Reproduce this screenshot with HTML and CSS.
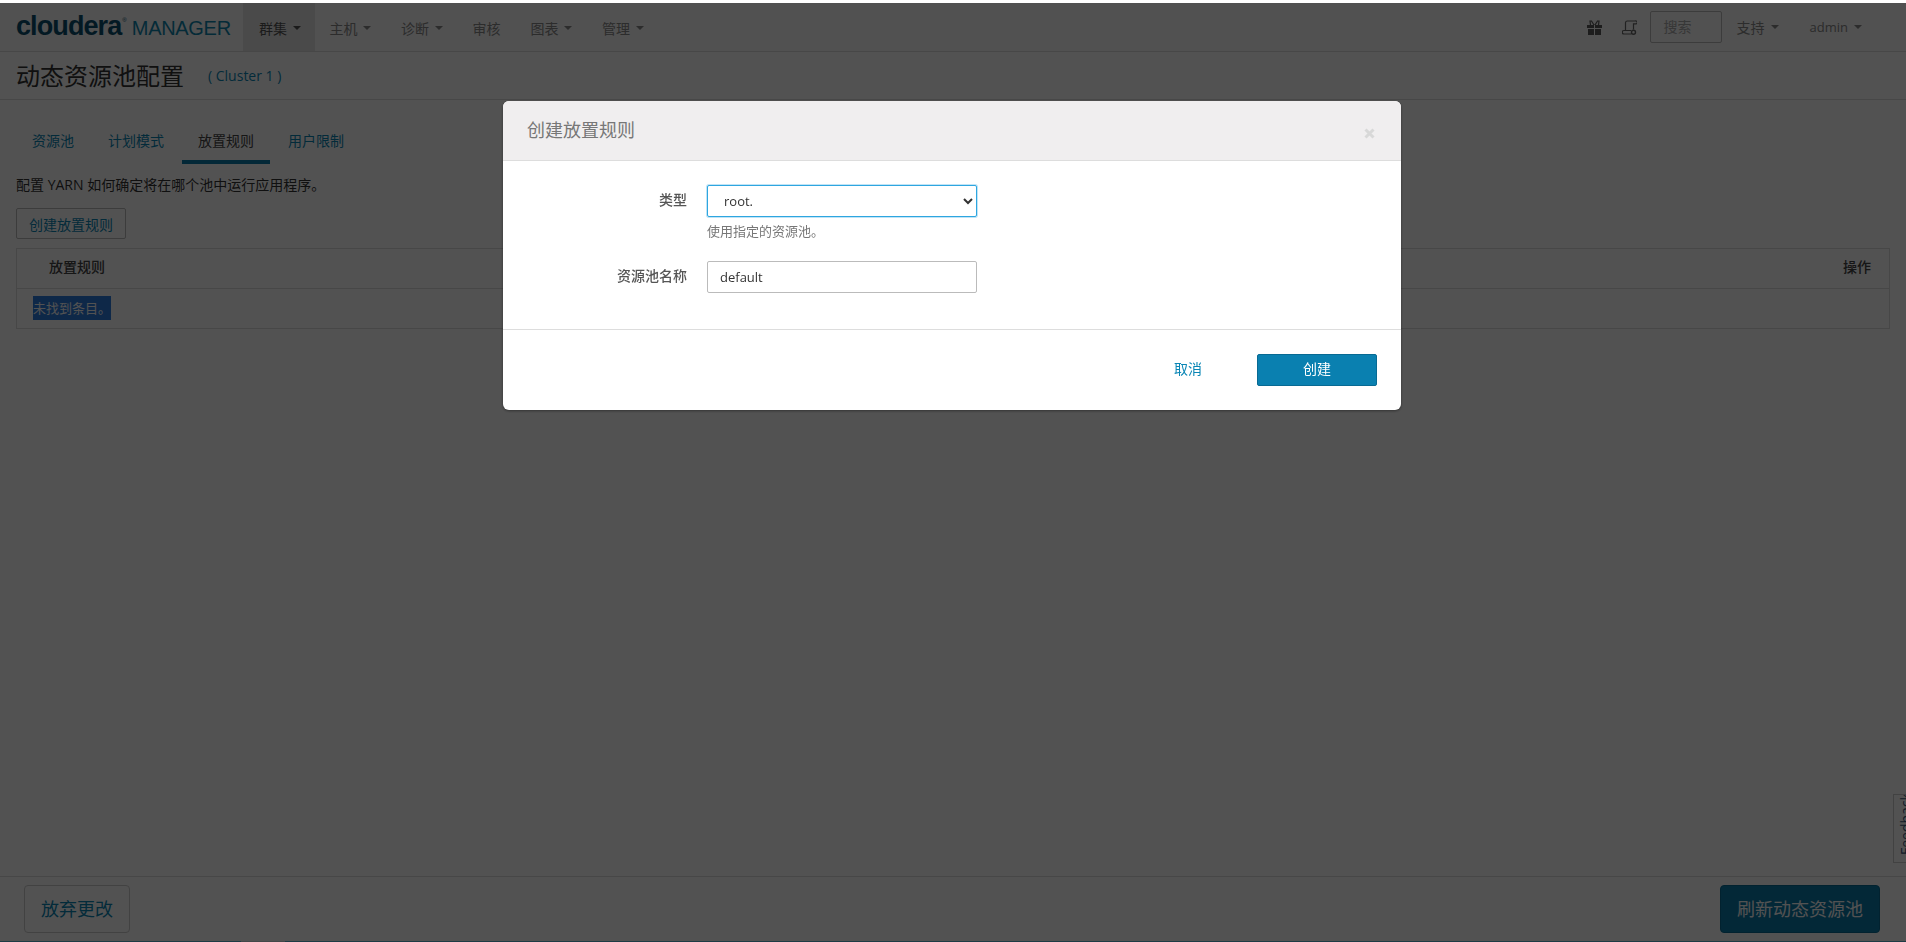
FILE: index.html
```html
<!DOCTYPE html>
<html lang="zh-CN">
<head>
<meta charset="utf-8">
<title>动态资源池配置</title>
<link rel="stylesheet" href="styles.css">
</head>
<body>
<div class="page">
  <header class="topbar">
    <div class="logo"><span class="logo-a">cloudera</span><span class="logo-r">®</span><span class="logo-b">MANAGER</span></div>
    <nav class="nav">
      <a class="nav-item active">群集<i class="caret"></i></a>
      <a class="nav-item">主机<i class="caret"></i></a>
      <a class="nav-item">诊断<i class="caret"></i></a>
      <a class="nav-item">审核</a>
      <a class="nav-item">图表<i class="caret"></i></a>
      <a class="nav-item">管理<i class="caret"></i></a>
    </nav>
    <div class="nav-right">
      <svg class="ico gift" viewBox="0 0 15 15"><path d="M0 5h7v3H0zM8 5h7v3H8zM1 9h6v6H1zM8 9h6v6H8z" fill="#5a5a5a"/><path d="M7 5L4.500 1H3L3.500 5M8 5l2.500-4H12l-.5 4" stroke="#5a5a5a" stroke-width="1.200" fill="none"/></svg>
      <svg class="ico scroll" viewBox="0 0 15 15"><path d="M3.500 10.500V2.500A1.800 1.800 0 0 1 5.300 1H13a1.500 1.500 0 0 1 1.300 2.800H11.500V9.500M2 14a1.700 1.700 0 0 1 0-3.500h7M2 14h7.500" fill="none" stroke="#666" stroke-width="1.200"/><circle cx="11.500" cy="12.200" r="2" fill="none" stroke="#666" stroke-width="1.400"/></svg>
      <div class="search">搜索</div>
      <a class="nav-item r1">支持<i class="caret"></i></a>
      <a class="nav-item r2">admin<i class="caret"></i></a>
    </div>
  </header>
  <div class="titlebar"><h1 class="title">动态资源池配置</h1><span class="cluster">( Cluster 1 )</span></div>
  <main class="content">
    <ul class="tabs">
      <li class="tab">资源池</li>
      <li class="tab">计划模式</li>
      <li class="tab active">放置规则</li>
      <li class="tab">用户限制</li>
    </ul>
    <p class="desc">配置 YARN 如何确定将在哪个池中运行应用程序。</p>
    <button class="btn-outline">创建放置规则</button>
    <div class="table">
      <div class="thead"><span class="th-name">放置规则</span><span class="th-op">操作</span></div>
      <div class="tbody"><span class="selected">未找到条目。</span></div>
    </div>
  </main>
  <footer class="footer">
    <button class="btn-large">放弃更改</button>
    <button class="btn-primary-large">刷新动态资源池</button>
  </footer>
  <div class="strip"><div class="strip-seg"></div></div>
  <div class="feedback"><span>Feedback</span></div>
</div>
<div class="overlay"></div>
<div class="modal">
  <div class="modal-head">
    <h3 class="modal-title">创建放置规则</h3>
    <svg class="close" viewBox="0 0 11 11"><path d="M1.500 1.500l8 8M9.500 1.500l-8 8" stroke="#d8d8d8" stroke-width="3" fill="none"/></svg>
  </div>
  <div class="modal-body">
    <div class="field">
      <label class="label">类型</label>
      <div class="control">
        <select class="input focus"><option>root.</option></select>
        <div class="help">使用指定的资源池。</div>
      </div>
    </div>
    <div class="field">
      <label class="label">资源池名称</label>
      <div class="control"><input class="input" value="default"></div>
    </div>
  </div>
  <div class="modal-foot">
    <a class="cancel">取消</a>
    <button class="create">创建</button>
  </div>
</div>
</body>
</html>
```
FILE: styles.css
```css
* { box-sizing: border-box; }
html, body { margin: 0; height: 100%; overflow: hidden; }
body {
  font-family: "Open Sans", "Liberation Sans", "Noto Sans CJK SC", sans-serif;
  font-size: 14px;
  color: #333;
  background: #fff;
}
button { font-family: inherit; }
.page { height: 942px; padding-top: 3px; display: flex; flex-direction: column; position: relative; }
.topbar { height: 49px; flex: none; display: flex; align-items: stretch; background: #fbfbfb; border-bottom: 1px solid #ddd; padding-left: 16px; }
.logo { width: 227px; flex: none; margin-top: 8px; white-space: nowrap; line-height: 30px; }
.logo-a { font: bold 27px/30px "Liberation Sans", sans-serif; color: #0a4f6e; letter-spacing: -0.9px; }
.logo-r { font: 6px/1 "Liberation Sans", sans-serif; color: #0a4f6e; vertical-align: 13px; margin-left: 1px; }
.logo-b { font: 20px/30px "Liberation Sans", sans-serif; color: #0f86ad; margin-left: 5px; letter-spacing: -0.3px; }
.nav { display: flex; }
.nav-item { display: flex; align-items: center; padding: 1px 15px 0; color: #888; white-space: nowrap; }
.nav-item.active { background: #e7e7e7; color: #555; padding: 1px 14px 0 16px; }
.caret { display: inline-block; margin-left: 5.500px; width: 0; height: 0; border-left: 4px solid transparent; border-right: 4px solid transparent; border-top: 4px solid currentColor; }
.nav-right { margin-left: auto; display: flex; align-items: center; padding-right: 44px; }
.nav-right .caret { margin-left: 6px; }
.ico { display: block; flex: none; }
.gift { width: 15px; height: 15px; margin-right: 20px; }
.scroll { width: 15px; height: 15px; margin-right: 13px; }
.search { width: 72px; height: 32px; border: 1px solid #bbb; border-radius: 2px; padding-left: 13px; line-height: 30px; color: #aaa; }
.nav-right .r1 { padding: 0 0 0 15px; }
.nav-right .r2 { padding: 0 0 0 31px; font-size: 13px; }
.titlebar { height: 48px; flex: none; display: flex; align-items: center; border-bottom: 1px solid #ddd; padding: 0 16px; }
.title { margin: 0; font-size: 24px; line-height: 34px; font-weight: 400; color: #333; }
.cluster { margin-left: 24px; color: #0a86b5; line-height: 20px; }
.content { flex: 1; min-height: 0; padding: 0 16px; }
.tabs { list-style: none; margin: 19px 0 0; padding: 0; display: flex; height: 45px; }
.tab { padding: 0 16px; margin-right: 2px; line-height: 44px; color: #0a86b5; }
.tab.active { color: #444; border-bottom: 4px solid #0a7cab; }
.desc { margin: 11px 0 0; line-height: 20px; color: #333; }
.btn-outline { display: block; margin-top: 13px; height: 31px; width: 110px; padding: 0; background: #fff; border: 1px solid #bbb; border-radius: 2px; color: #0a86b5; font-size: 14px; }
.table { margin-top: 9px; border: 1px solid #ddd; }
.thead { display: flex; justify-content: space-between; height: 40px; line-height: 36px; padding: 0 18px 0 32px; font-weight: 500; color: #444; border-bottom: 1px solid #ddd; }
.tbody { height: 39px; padding: 7px 16px 0; }
.selected { display: block; width: 78px; height: 24px; font-size: 13px; line-height: 24px; background: #2e7de0; color: #fff; }
.footer { height: 65px; flex: none; display: flex; justify-content: space-between; align-items: flex-start; padding: 8px 26px 0 24px; border-top: 1px solid #ddd; }
.btn-large { width: 106px; height: 48px; font-size: 18px; color: #0a86b5; background: #fff; border: 1px solid #ccc; border-radius: 4px; padding: 0 0 2px; }
.btn-primary-large { width: 160px; height: 48px; font-size: 18px; color: #fff; background: #0a7cab; border: 1px solid #086a93; border-radius: 4px; padding: 0 0 2px; }
.strip { height: 1px; flex: none; background: #5fb6d6; }
.strip-seg { width: 44px; height: 1px; margin-left: 241px; background: #d0e0e6; }
.feedback { position: absolute; right: 0; top: 794px; width: 13px; height: 69px; background: #fff; border: 1px solid #ccc; border-right: 0; overflow: hidden; }
.feedback span { position: absolute; left: 3px; top: 60px; transform-origin: 0 0; transform: rotate(-90deg); color: #3d5a80; font-size: 14px; line-height: 18px; white-space: nowrap; }
.overlay { position: fixed; left: 0; right: 0; top: 3px; bottom: 0; background: rgba(0,0,0,.68); }
.modal { position: fixed; left: 503px; top: 101px; width: 898px; height: 309px; background: #fff; border-radius: 6px; box-shadow: 0 1px 3px rgba(0,0,0,.4); display: flex; flex-direction: column; overflow: hidden; }
.modal-head { height: 60px; flex: none; background: #f0eeef; border-bottom: 1px solid #ddd; display: flex; justify-content: space-between; align-items: center; padding: 0 26px 0 24px; }
.modal-title { margin: -2px 0 0; font-size: 18px; font-weight: 400; line-height: 26px; color: #777; }
.close { width: 11px; height: 11px; margin-top: 6px; flex: none; }
.modal-body { height: 169px; flex: none; padding-top: 24px; border-bottom: 1px solid #ddd; }
.field { display: flex; margin-bottom: 21px; }
.label { width: 184px; flex: none; text-align: right; font-weight: 500; color: #555; line-height: 30px; }
.control { margin-left: 20px; width: 270px; }
.input { display: block; width: 270px; height: 32px; border: 1px solid #bbb; border-radius: 2px; padding: 0 12px; background: #fff; color: #333; font: 13px "Open Sans", sans-serif; }
.input.focus { border-color: #2ea6e0; box-shadow: 0 0 0 1px rgba(46,166,224,.3); outline: 0; }
.help { margin-top: 5px; color: #777; font-size: 13px; line-height: 18px; }
.modal-foot { flex: 1; display: flex; justify-content: flex-end; align-items: center; padding: 0 24px 0 0; }
.cancel { color: #0a86b5; margin: -5px 55px 0 0; }
.create { width: 120px; height: 32px; padding: 0 0 4px; background: #0a80b0; border: 1px solid #086a93; border-radius: 2px; color: #fff; font-size: 14px; }
```
